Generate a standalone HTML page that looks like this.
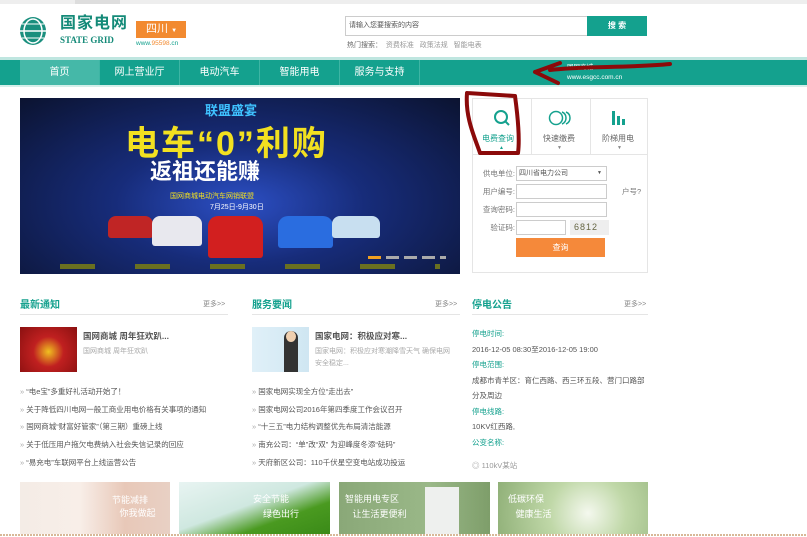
<!DOCTYPE html>
<html><head><meta charset="utf-8"><style>
*{margin:0;padding:0;box-sizing:border-box}
body{width:807px;height:537px;overflow:hidden;background:#fff;font-family:"Liberation Sans","Noto Sans CJK SC",sans-serif;position:relative;color:#555}
.a{position:absolute}
.nav{top:60px;left:0;width:807px;height:25px;background:#14a18e}
.nav div{position:absolute;top:0;height:25px;line-height:25px;color:#fff;font-size:10px;text-align:center;width:80px;border-right:1px solid #3db5a4}
.t{font-size:10px;color:#14a18e;font-weight:bold}
.more{font-size:7px;color:#888}
.li{font-size:7.5px;color:#555;white-space:nowrap}
.li:before{content:"» ";color:#aaa}
.hr{height:1px;background:#e5e5e5}
.lbl{font-size:7.5px;color:#777;text-align:right;width:40px}
.inp{border:1px solid #ccc;height:15px;background:#fff}
</style></head><body>
<div class="a" style="top:0;left:0;width:807px;height:4px;background:#eee"></div>
<div class="a" style="top:0;left:75px;width:45px;height:4px;background:#ddd"></div>
<svg class="a" style="left:18px;top:15px" width="30" height="32" viewBox="0 0 30 32"><ellipse cx="15" cy="16" rx="13" ry="14" fill="#1a8f7e"/><ellipse cx="15" cy="16" rx="9" ry="12" fill="none" stroke="#fff" stroke-width="1.5"/><line x1="2" y1="16" x2="28" y2="16" stroke="#fff" stroke-width="1.5"/><line x1="4" y1="9" x2="26" y2="9" stroke="#fff"/><line x1="4" y1="23" x2="26" y2="23" stroke="#fff"/></svg>
<div class="a" style="left:60px;top:15px;font-size:16px;line-height:18px;color:#148a78;font-weight:bold;letter-spacing:1px">国家电网</div>
<div class="a" style="left:60px;top:35px;font-size:9px;line-height:10px;color:#148a78;font-family:'Liberation Serif',serif;font-weight:bold">STATE GRID</div>
<div class="a" style="left:136px;top:21px;width:50px;height:17px;background:#f28a30;color:#fff;font-size:11px;line-height:17px;padding-left:10px">四川 <span style="font-size:6px">▼</span></div>
<div class="a" style="left:136px;top:40px;font-size:6.5px;color:#14a18e">www.<span style="color:#f28a30">95598</span>.cn</div>
<div class="a inp" style="left:345px;top:16px;width:243px;height:20px;font-size:7px;line-height:18px;padding-left:3px;color:#555">请输入您要搜索的内容</div>
<div class="a" style="left:587px;top:16px;width:60px;height:20px;background:#14a18e;color:#fff;font-size:8px;line-height:20px;text-align:center;font-weight:bold">搜 索</div>
<div class="a" style="left:347px;top:40px;font-size:7px;color:#666">热门搜索： <span style="color:#999">&nbsp;资费标准 &nbsp;&nbsp;政策法规 &nbsp;&nbsp;智能电表</span></div>
<div class="a" style="top:57px;left:0;width:807px;height:3px;background:#bfe6e0"></div>
<div class="a nav">
<div style="left:20px;background:#45b8a8">首页</div>
<div style="left:100px">网上营业厅</div>
<div style="left:180px">电动汽车</div>
<div style="left:260px">智能用电</div>
<div style="left:340px">服务与支持</div>
<div style="left:555px;width:100px;border:0;font-size:6.5px;line-height:10px;text-align:left;padding-top:3px;padding-left:12px">国网商城<br>www.esgcc.com.cn</div>
</div>
<div class="a" style="top:85px;left:0;width:807px;height:2px;background:#d4efea"></div>
<div class="a" style="left:20px;top:98px;width:440px;height:176px;background:radial-gradient(ellipse at 50% 60%,#2c4fc4 0%,#172c7a 40%,#0b1330 100%);overflow:hidden">
<div class="a" style="left:185px;top:2px;font-size:13px;color:#3fc2ff;font-weight:bold">联盟盛宴</div>
<div class="a" style="left:105px;top:18px;font-size:34px;color:#f2e020;font-weight:bold;letter-spacing:2px;white-space:nowrap">电车“0”利购</div>
<div class="a" style="left:130px;top:56px;font-size:22px;color:#fff;font-weight:bold">返祖还能赚</div>
<div class="a" style="left:150px;top:93px;font-size:7px;color:#f2e020">国网商城电动汽车网销联盟</div>
<div class="a" style="left:190px;top:104px;font-size:7px;color:#fff">7月25日-9月30日</div>
<div class="a" style="left:88px;top:118px;width:45px;height:22px;background:#c02525;border-radius:8px 8px 3px 3px"></div>
<div class="a" style="left:132px;top:118px;width:50px;height:30px;background:#e8e8ee;border-radius:8px 8px 3px 3px"></div>
<div class="a" style="left:188px;top:118px;width:55px;height:42px;background:#d21f1f;border-radius:10px 10px 3px 3px"></div>
<div class="a" style="left:258px;top:118px;width:55px;height:32px;background:#2a6de0;border-radius:10px 10px 3px 3px"></div>
<div class="a" style="left:312px;top:118px;width:48px;height:22px;background:#c8dff0;border-radius:8px 8px 3px 3px"></div>
<div class="a" style="left:40px;top:166px;width:380px;height:5px;background:repeating-linear-gradient(90deg,#6a7020 0 35px,transparent 35px 75px)"></div>
<div class="a" style="left:348px;top:158px;width:13px;height:3px;background:#f0a020"></div>
<div class="a" style="left:366px;top:158px;width:60px;height:3px;background:repeating-linear-gradient(90deg,#aaa 0 13px,transparent 13px 18px)"></div>
</div>
<div class="a" style="left:472px;top:98px;width:176px;height:175px;border:1px solid #e5e5e5"></div>
<div class="a" style="left:531px;top:99px;width:1px;height:55px;background:#e5e5e5"></div>
<div class="a" style="left:590px;top:99px;width:1px;height:55px;background:#e5e5e5"></div>
<div class="a" style="left:473px;top:154px;width:174px;height:1px;background:#e5e5e5"></div>
<svg class="a" style="left:493px;top:109px" width="18" height="18"><circle cx="8" cy="8" r="6" fill="none" stroke="#14a18e" stroke-width="2"/><line x1="12" y1="12" x2="16" y2="16" stroke="#14a18e" stroke-width="2"/></svg>
<div class="a" style="left:482px;top:133px;font-size:8px;color:#14a18e">电费查询</div>
<div class="a" style="left:499px;top:145px;font-size:5px;color:#14a18e">▲</div>
<svg class="a" style="left:548px;top:110px" width="28" height="16"><circle cx="8" cy="8" r="6.5" fill="none" stroke="#14a18e" stroke-width="1.5"/><path d="M14 2a6.5 6.5 0 0 1 0 12M18 2a6.5 6.5 0 0 1 0 12" fill="none" stroke="#14a18e" stroke-width="1.5"/></svg>
<div class="a" style="left:543px;top:133px;font-size:8px;color:#666">快速缴费</div>
<div class="a" style="left:557px;top:145px;font-size:5px;color:#888">▼</div>
<svg class="a" style="left:611px;top:110px" width="16" height="16"><rect x="1" y="1" width="3" height="14" fill="#14a18e"/><rect x="6" y="6" width="3" height="9" fill="#14a18e"/><rect x="11" y="9" width="3" height="6" fill="#14a18e"/></svg>
<div class="a" style="left:602px;top:133px;font-size:8px;color:#666">阶梯用电</div>
<div class="a" style="left:617px;top:145px;font-size:5px;color:#888">▼</div>
<svg class="a" style="left:460px;top:58px" width="220" height="100"><path d="M7 35 C5 60 15 80 20 95 M7 35 L55 38 M55 38 C58 60 60 80 58 95 M20 95 L58 95" fill="none" stroke="#8b0a0a" stroke-width="4" stroke-linecap="round"/><path d="M90 12 C120 8 170 10 210 6 M75 14 L100 5 M75 14 L98 25" fill="none" stroke="#8b0a0a" stroke-width="4" stroke-linecap="round"/></svg>
<div class="a lbl" style="left:475px;top:168px">供电单位:</div>
<div class="a inp" style="left:516px;top:166px;width:91px;font-size:7px;padding-left:2px;line-height:13px">四川省电力公司 <span style="float:right;padding-right:4px;font-size:5px">▼</span></div>
<div class="a lbl" style="left:475px;top:186px">用户编号:</div>
<div class="a inp" style="left:516px;top:184px;width:91px"></div>
<div class="a" style="left:622px;top:186px;font-size:7.5px;color:#777">户号?</div>
<div class="a lbl" style="left:475px;top:204px">查询密码:</div>
<div class="a inp" style="left:516px;top:202px;width:91px"></div>
<div class="a lbl" style="left:475px;top:222px">验证码:</div>
<div class="a inp" style="left:516px;top:220px;width:50px"></div>
<div class="a" style="left:570px;top:220px;width:39px;height:15px;background:#eee;font-size:9px;color:#664;letter-spacing:1px;padding-left:4px;line-height:15px">6812</div>
<div class="a" style="left:516px;top:238px;width:89px;height:19px;background:#f5893a;color:#fff;font-size:8px;text-align:center;line-height:19px">查询</div>
<div class="a t" style="left:20px;top:296px">最新通知</div>
<div class="a more" style="left:203px;top:299px">更多&gt;&gt;</div>
<div class="a hr" style="left:20px;top:314px;width:208px"></div>
<div class="a" style="left:20px;top:327px;width:57px;height:45px;background:radial-gradient(circle at 50% 55%,#f0c020 0,#c02020 40%,#8a1010 100%)"></div>
<div class="a" style="left:83px;top:330px;font-size:8.5px;color:#555;font-weight:bold">国网商城 周年狂欢趴...</div>
<div class="a" style="left:83px;top:346px;font-size:7px;color:#aaa">国网商城 周年狂欢趴</div>
<div class="a li" style="left:20px;top:386px">“电e宝”多重好礼活动开始了！</div>
<div class="a li" style="left:20px;top:404px">关于降低四川电网一般工商业用电价格有关事项的通知</div>
<div class="a li" style="left:20px;top:421px">国网商城“财富好管家”（第三期）重磅上线</div>
<div class="a li" style="left:20px;top:439px">关于低压用户拖欠电费纳入社会失信记录的回应</div>
<div class="a li" style="left:20px;top:457px">“易充电”车联网平台上线运营公告</div>
<div class="a t" style="left:252px;top:296px">服务要闻</div>
<div class="a more" style="left:435px;top:299px">更多&gt;&gt;</div>
<div class="a hr" style="left:252px;top:314px;width:208px"></div>
<div class="a" style="left:252px;top:327px;width:57px;height:45px;background:linear-gradient(90deg,#e0f0f8,#cfe6f2)"><div class="a" style="left:32px;top:4px;width:14px;height:41px;background:#333;border-radius:7px 7px 0 0"></div><div class="a" style="left:34px;top:4px;width:10px;height:11px;background:#f0d0b0;border-radius:50%"></div></div>
<div class="a" style="left:315px;top:330px;font-size:8.5px;color:#555;font-weight:bold">国家电网：积极应对寒...</div>
<div class="a" style="left:315px;top:346px;font-size:7px;color:#aaa;width:140px;line-height:12px">国家电网：积极应对寒潮降雪天气 确保电网安全稳定...</div>
<div class="a li" style="left:252px;top:386px">国家电网实现全方位“走出去”</div>
<div class="a li" style="left:252px;top:404px">国家电网公司2016年第四季度工作会议召开</div>
<div class="a li" style="left:252px;top:421px">“十三五”电力结构调整优先布局清洁能源</div>
<div class="a li" style="left:252px;top:439px">南充公司：“单”改“双” 为迎峰度冬添“砝码”</div>
<div class="a li" style="left:252px;top:457px">天府新区公司：110千伏星空变电站成功投运</div>
<div class="a t" style="left:472px;top:296px">停电公告</div>
<div class="a more" style="left:624px;top:299px">更多&gt;&gt;</div>
<div class="a hr" style="left:472px;top:314px;width:176px"></div>
<div class="a" style="left:472px;top:326px;font-size:7.5px;line-height:15.5px;color:#555;width:175px">
<div style="color:#14a18e">停电时间:</div><div>2016-12-05 08:30至2016-12-05 19:00</div><div style="color:#14a18e">停电范围:</div><div>成都市青羊区：育仁西路、西三环五段、营门口路部分及周边</div><div style="color:#14a18e">停电线路:</div><div>10KV红西路,</div><div style="color:#14a18e">公变名称:</div></div>
<div class="a" style="left:472px;top:460px;font-size:7.5px;color:#999">◎ 110kV某站</div>
<div class="a" style="left:20px;top:482px;width:150px;height:52px;background:linear-gradient(90deg,#f4ece6,#f8eee8 40%,#e8c8b8 70%,#e8d0c4)"><div class="a" style="left:92px;top:12px;color:#fff;font-size:9px;line-height:13px">节能减排<br>&nbsp;&nbsp;&nbsp;你我做起</div></div>
<div class="a" style="left:179px;top:482px;width:151px;height:52px;background:linear-gradient(160deg,#e8f4f2,#cfe8e0 45%,#4a9a20 70%,#3a8a18)"><div class="a" style="left:74px;top:10px;color:#fff;font-size:9px;line-height:15px">安全节能<br>&nbsp;&nbsp;&nbsp;&nbsp;绿色出行</div></div>
<div class="a" style="left:339px;top:482px;width:151px;height:52px;background:linear-gradient(90deg,#8aa878,#9ab888 60%,#7e9e6a)"><div class="a" style="left:6px;top:10px;color:#fff;font-size:9px;line-height:15px">智能用电专区<br>&nbsp;&nbsp;&nbsp;让生活更便利</div><div class="a" style="left:86px;top:5px;width:34px;height:47px;background:#eef0ee"></div></div>
<div class="a" style="left:498px;top:482px;width:150px;height:52px;background:radial-gradient(circle at 60% 60%,#f4f8ee 0,#c0d8a8 40%,#90b078 100%)"><div class="a" style="left:10px;top:10px;color:#fff;font-size:9px;line-height:15px">低碳环保<br>&nbsp;&nbsp;&nbsp;健康生活</div></div>
<div class="a" style="left:0;top:534px;width:807px;height:2px;background:repeating-linear-gradient(90deg,#d8b898 0 2px,transparent 2px 3px)"></div>
</body></html>
